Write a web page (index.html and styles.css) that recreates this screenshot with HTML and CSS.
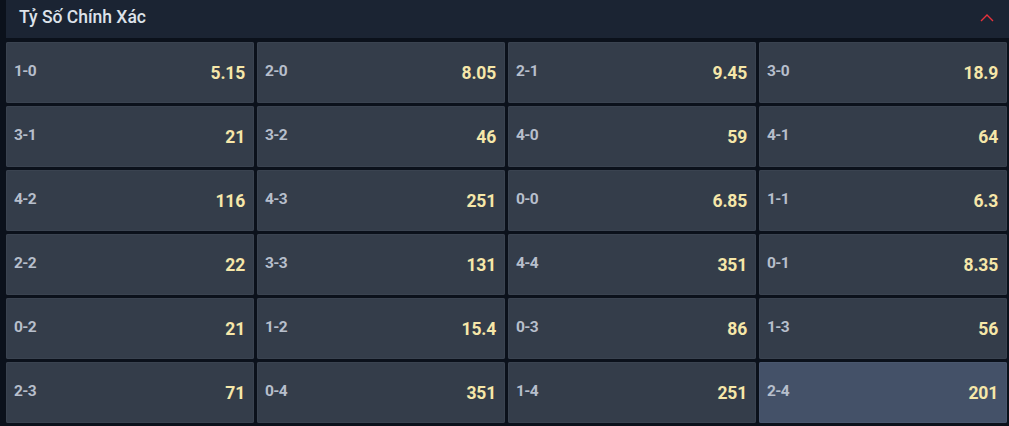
FILE: index.html
```html
<!DOCTYPE html>
<html lang="vi">
<head>
<meta charset="utf-8">
<link rel="stylesheet" href="styles.css">
</head>
<body>
<div class="panel">
  <div class="header">
    <span class="title">Tỷ Số Chính Xác</span>
    <svg class="chev" width="14" height="9" viewBox="0 0 14 9"><path d="M1 8 L7 2 L13 8" fill="none" stroke="#e8323c" stroke-width="1.4"/></svg>
  </div>
  <div class="grid">
    <div class="cell"><span class="lbl">1-0</span><span class="odd">5.15</span></div>
    <div class="cell"><span class="lbl">2-0</span><span class="odd">8.05</span></div>
    <div class="cell"><span class="lbl">2-1</span><span class="odd">9.45</span></div>
    <div class="cell"><span class="lbl">3-0</span><span class="odd">18.9</span></div>
    <div class="cell"><span class="lbl">3-1</span><span class="odd">21</span></div>
    <div class="cell"><span class="lbl">3-2</span><span class="odd">46</span></div>
    <div class="cell"><span class="lbl">4-0</span><span class="odd">59</span></div>
    <div class="cell"><span class="lbl">4-1</span><span class="odd">64</span></div>
    <div class="cell"><span class="lbl">4-2</span><span class="odd">116</span></div>
    <div class="cell"><span class="lbl">4-3</span><span class="odd">251</span></div>
    <div class="cell"><span class="lbl">0-0</span><span class="odd">6.85</span></div>
    <div class="cell"><span class="lbl">1-1</span><span class="odd">6.3</span></div>
    <div class="cell"><span class="lbl">2-2</span><span class="odd">22</span></div>
    <div class="cell"><span class="lbl">3-3</span><span class="odd">131</span></div>
    <div class="cell"><span class="lbl">4-4</span><span class="odd">351</span></div>
    <div class="cell"><span class="lbl">0-1</span><span class="odd">8.35</span></div>
    <div class="cell"><span class="lbl">0-2</span><span class="odd">21</span></div>
    <div class="cell"><span class="lbl">1-2</span><span class="odd">15.4</span></div>
    <div class="cell"><span class="lbl">0-3</span><span class="odd">86</span></div>
    <div class="cell"><span class="lbl">1-3</span><span class="odd">56</span></div>
    <div class="cell"><span class="lbl">2-3</span><span class="odd">71</span></div>
    <div class="cell"><span class="lbl">0-4</span><span class="odd">351</span></div>
    <div class="cell"><span class="lbl">1-4</span><span class="odd">251</span></div>
    <div class="cell active"><span class="lbl">2-4</span><span class="odd">201</span></div>
  </div>
</div>
</body>
</html>
```
FILE: styles.css
```css
html, body {
  margin: 0;
  padding: 0;
  background: #0b111b;
  font-family: Roboto, "Liberation Sans", sans-serif;
  overflow: hidden;
}
.panel {
  width: 1009px;
  height: 426px;
  padding-left: 6px;
  box-sizing: border-box;
}
.header {
  height: 38px;
  background: #1b2433;
  display: flex;
  align-items: center;
  justify-content: space-between;
  padding: 0 15px 0 13px;
  margin-bottom: 4px;
}
.title {
  color: #dde2ea;
  font-size: 17.5px;
  font-weight: 500;
  position: relative;
  top: -2px;
}
.chev {
  position: relative;
  top: -2px;
}
.grid {
  display: grid;
  grid-template-columns: repeat(4, 248px);
  grid-auto-rows: 61px;
  column-gap: 3px;
  row-gap: 3px;
}
.cell {
  background: #343d4a;
  border-radius: 2px;
  box-shadow: inset 0 0 0 1px #3a4350;
  display: flex;
  align-items: center;
  justify-content: space-between;
  padding: 0 9px 0 8px;
}
.cell.active {
  background: #445168;
  box-shadow: inset 0 0 0 1px #4a576e;
}
.lbl {
  color: #b7bfcc;
  font-size: 15.5px;
  font-weight: 700;
  letter-spacing: -0.6px;
  position: relative;
  top: -2px;
}
.odd {
  color: #f6e7a9;
  font-size: 17.5px;
  font-weight: 700;
  letter-spacing: -0.2px;
  position: relative;
  top: 0;
}
```
